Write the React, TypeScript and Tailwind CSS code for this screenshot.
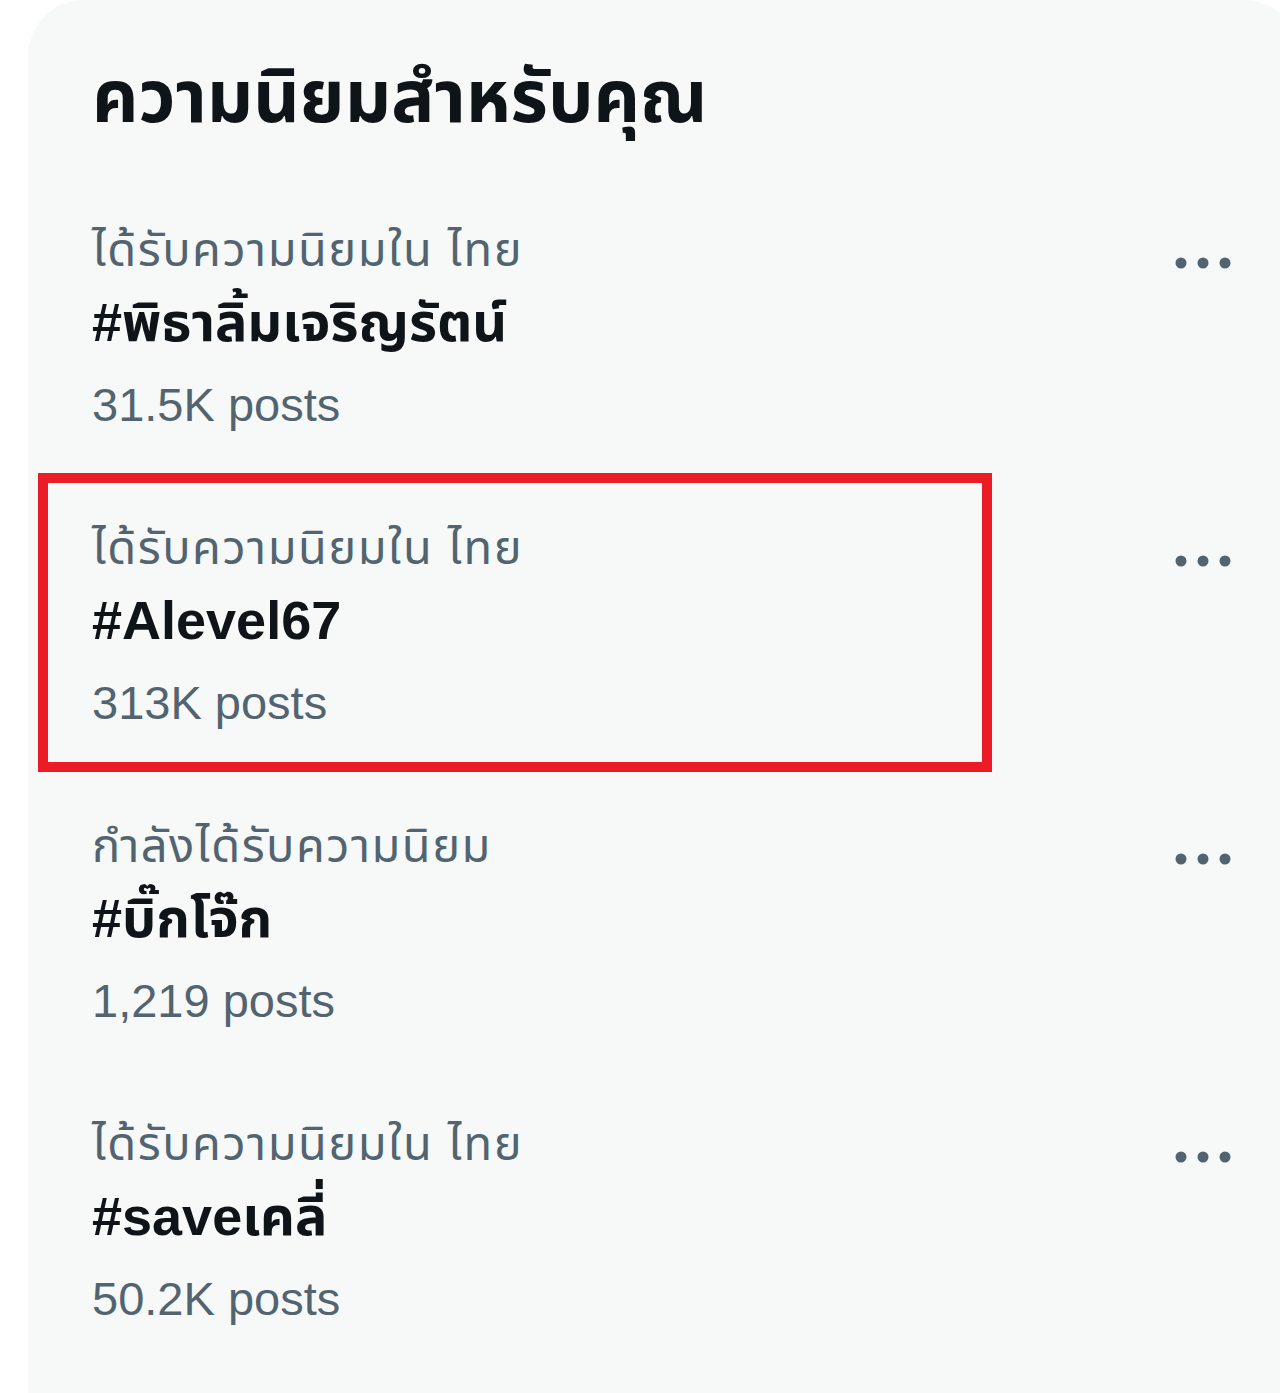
import React from "react";

const trends = [
  { cat: "ได้รับความนิยมใน ไทย", name: "#พิธาลิ้มเจริญรัตน์", posts: "31.5K posts" },
  { cat: "ได้รับความนิยมใน ไทย", name: "#Alevel67", posts: "313K posts", boxed: true },
  { cat: "กำลังได้รับความนิยม", name: "#บิ๊กโจ๊ก", posts: "1,219 posts" },
  { cat: "ได้รับความนิยมใน ไทย", name: "#saveเคลี่", posts: "50.2K posts" },
];

function Dots() {
  return (
    <svg width="60" height="20" viewBox="0 0 60 20" className="mt-[35px] shrink-0">
      <circle cx="8" cy="10" r="5.5" fill="#536471" />
      <circle cx="30" cy="10" r="5.5" fill="#536471" />
      <circle cx="52" cy="10" r="5.5" fill="#536471" />
    </svg>
  );
}

export default function App() {
  return (
    <div
      className="w-[1280px] h-[1393px] overflow-hidden bg-white"
      style={{ fontFamily: '"Liberation Sans", "Noto Sans Thai", "Noto Sans", sans-serif' }}
    >
      <div className="ml-[28px] w-[1272px] h-[1500px] bg-[#f7f9f9] rounded-t-[56px]">
        <div className="pl-[64px] pt-[55px] h-[184px]">
          <h2 className="text-[72px] leading-[84px] font-bold text-[#0f1419]">ความนิยมสำหรับคุณ</h2>
        </div>
        {trends.map((t, i) => (
          <div key={i} className="relative flex justify-between pl-[64px] pr-[67px] py-[34px]">
            {t.boxed && (
              <div className="absolute left-[10px] top-[-9px] w-[954px] h-[299px] border-[10px] border-[#ec1c27] pointer-events-none" />
            )}
            <div className="flex flex-col">
              <div className="text-[47px] leading-[64px] tracking-[1.5px] text-[#536471]">{t.cat}</div>
              <div className="text-[54px] leading-[80px] font-bold text-[#0f1419]">{t.name}</div>
              <div className="text-[47px] leading-[86px] text-[#536471]">{t.posts}</div>
            </div>
            <Dots />
          </div>
        ))}
      </div>
    </div>
  );
}
